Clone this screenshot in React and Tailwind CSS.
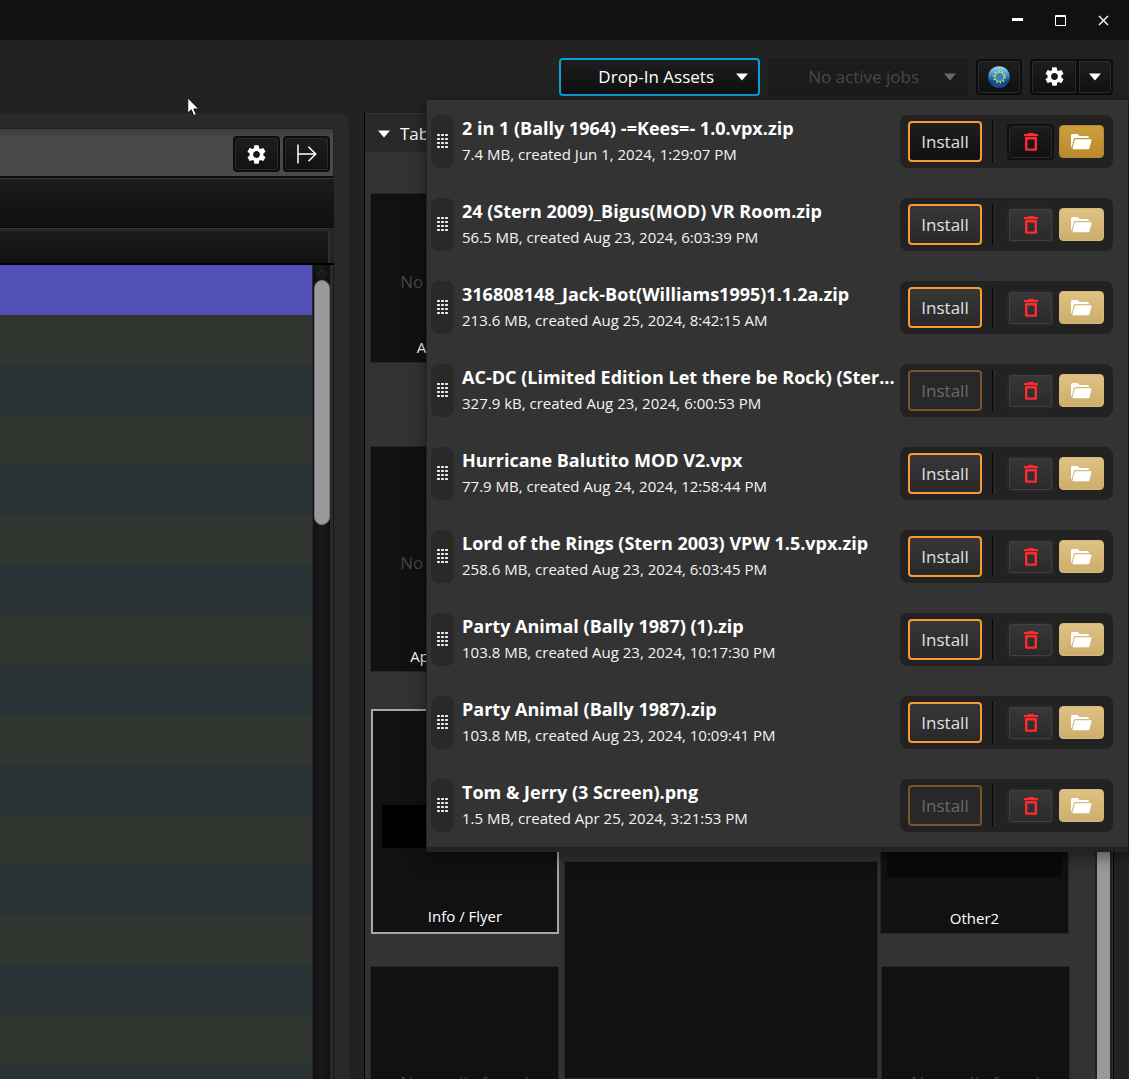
import React from "react";
import { MdSettings } from "react-icons/md";

const assets = [
  { name: "2 in 1 (Bally 1964) -=Kees=- 1.0.vpx.zip", info: "7.4 MB, created Jun 1, 2024, 1:29:07 PM", active: true },
  { name: "24 (Stern 2009)_Bigus(MOD) VR Room.zip", info: "56.5 MB, created Aug 23, 2024, 6:03:39 PM" },
  { name: "316808148_Jack-Bot(Williams1995)1.1.2a.zip", info: "213.6 MB, created Aug 25, 2024, 8:42:15 AM" },
  { name: "AC-DC (Limited Edition Let there be Rock) (Ster...", info: "327.9 kB, created Aug 23, 2024, 6:00:53 PM", disabled: true },
  { name: "Hurricane Balutito MOD V2.vpx", info: "77.9 MB, created Aug 24, 2024, 12:58:44 PM" },
  { name: "Lord of the Rings (Stern 2003) VPW 1.5.vpx.zip", info: "258.6 MB, created Aug 23, 2024, 6:03:45 PM" },
  { name: "Party Animal (Bally 1987) (1).zip", info: "103.8 MB, created Aug 23, 2024, 10:17:30 PM" },
  { name: "Party Animal (Bally 1987).zip", info: "103.8 MB, created Aug 23, 2024, 10:09:41 PM" },
  { name: "Tom & Jerry (3 Screen).png", info: "1.5 MB, created Apr 25, 2024, 3:21:53 PM", disabled: true },
];

const darkButton =
  "flex items-center justify-center rounded border-2 border-[#0c0c0c] bg-linear-to-b from-[#1e1e1e] to-[#111] text-white shadow-[inset_0_0_0_1px_#2b2b2b]";

function Triangle({ className }) {
  return (
    <svg viewBox="0 0 12 8" className={className} aria-hidden="true">
      <path d="M0 .5h12L6 7.5z" fill="currentColor" />
    </svg>
  );
}

function Grip() {
  return (
    <svg width="11" height="15" viewBox="0 0 11 15" fill="#f4f4f4" aria-hidden="true">
      {[0, 4, 8, 12].map((y) => [0, 4, 8].map((x) => <rect key={x + "-" + y} x={x} y={y} width="3" height="2" rx=".8" />))}
    </svg>
  );
}

function Trash() {
  return (
    <svg width="14" height="18" viewBox="0 0 14 18" aria-hidden="true">
      <path d="M4.500 0h5l1 1H14v2.200H0V1h3.500z" fill="#ff2b2f" />
      <path d="M2.200 5.300h9.600v11.300H2.200z" fill="none" stroke="#ff2b2f" strokeWidth="2.400" strokeLinejoin="round" />
    </svg>
  );
}

function OpenFolder() {
  return (
    <svg width="21" height="16" viewBox="0 0 21 16" fill="#fff" aria-hidden="true">
      <path d="M1.500 0H6.500L8.500 2H16.500Q18 2 18 3.500V4H4.200Q3 4 2.700 5.200L.700 13.500Q0 13 0 12V1.500Q0 0 1.500 0z" />
      <path d="M5 5.200H19.800Q20.800 5.200 20.500 6.300L18.500 14Q18.200 15.200 17 15.200H1.800Q1.300 15.200 1.500 14.500L3.500 6.400Q3.900 5.200 5 5.200z" />
    </svg>
  );
}

function Globe() {
  return (
    <svg width="22" height="22" viewBox="0 0 22 22" aria-hidden="true">
      <defs>
        <linearGradient id="globe" x1="0" y1="0" x2="0" y2="1">
          <stop offset="0" stopColor="#a9dcf2" />
          <stop offset=".35" stopColor="#4a9ad2" />
          <stop offset=".7" stopColor="#0b4f92" />
          <stop offset="1" stopColor="#1f4a94" />
        </linearGradient>
      </defs>
      <circle cx="11" cy="11" r="10.800" fill="url(#globe)" />
      <circle cx="11.500" cy="11" r="5.700" fill="none" stroke="#cfe05a" strokeWidth="1.700" strokeDasharray="1.400 2.180" />
      <circle cx="11.500" cy="11" r="4.500" fill="#3585c4" stroke="#c6da5a" strokeWidth="1.100" />
    </svg>
  );
}

function AssetRow({ asset }) {
  return (
    <li className="flex h-[83px] items-start gap-2 last:h-[68px]">
      <div className="flex h-[53px] w-[23px] shrink-0 items-center justify-center rounded-lg bg-[#292929]">
        <Grip />
      </div>
      <div className="min-w-0 flex-1 whitespace-nowrap text-white">
        <div className="text-[18px] leading-[26px] font-bold">{asset.name}</div>
        <div className="text-[15px] leading-[26px] text-[#f4f4f4]">{asset.info}</div>
      </div>
      <div className="flex h-[53px] w-[213px] shrink-0 items-center rounded-lg bg-[#222] pl-2">
        <button
          disabled={asset.disabled}
          className={
            "h-[41px] w-[74px] rounded border-2 text-[17px] " +
            (asset.disabled
              ? "border-[#7c5226] bg-[#282828] text-[#6a6a6a]"
              : asset.active
                ? "border-[#fa9a32] bg-linear-to-b from-[#1e1e1e] to-[#101010] text-[#e0e0e0]"
                : "border-[#fa9a32] bg-linear-to-b from-[#373737] to-[#292929] text-[#e0e0e0]")
          }
        >
          Install
        </button>
        <div className="mr-3 ml-[10px] h-[41px] w-[3px] border-x border-l-[#0a0a0a] border-r-[#303030] bg-[#181818]" />
        <button
          aria-label="Delete"
          className={
            "flex h-9 w-[47px] items-center justify-center rounded border-2 " +
            (asset.active
              ? "border-[#0f0f0f] bg-linear-to-b from-[#1d1d1d] to-[#111] shadow-[inset_0_0_0_1px_#2a2a2a]"
              : "border-[#272727] bg-linear-to-b from-[#383838] to-[#2a2a2a] shadow-[inset_0_0_0_1px_#404040]")
          }
        >
          <Trash />
        </button>
        <button
          aria-label="Open folder"
          className={
            "ml-[5px] flex h-[33px] w-[45px] items-center justify-center rounded border " +
            (asset.active
              ? "border-[#b08a35] bg-linear-to-b from-[#cd9f3d] to-[#b88a2b]"
              : "border-[#d6b87d] bg-linear-to-b from-[#dfc184] to-[#ceae6c]")
          }
        >
          <OpenFolder />
        </button>
      </div>
    </li>
  );
}

function MediaCell({ label, className }) {
  return (
    <div className={"relative flex shrink-0 flex-col items-center justify-center border border-[#262626] bg-[#111] " + className}>
      <span className="pt-2 text-[17px] leading-6 whitespace-nowrap text-[#444]">No media found</span>
      {label && <span className="absolute inset-x-0 bottom-[5px] text-center text-[15px] leading-5 text-white">{label}</span>}
    </div>
  );
}

function TablePanel() {
  const rows = Array.from({ length: 16 }, (_, i) => i);
  return (
    <section className="flex w-[349px] shrink-0 flex-col rounded-tr-xl bg-[#292929] pt-[15px] pr-[15px]">
      <div className="flex h-[50px] shrink-0 items-center justify-end gap-[3px] border-t border-r border-b-2 border-t-[#222] border-r-[#222] border-b-[#0c0c0c] bg-linear-to-b from-[#3a3a3a] to-[#4a4a4a] to-20% pt-[3px] pr-[3px]">
        <button aria-label="Settings" className={darkButton + " h-9 w-[47px]"}>
          <MdSettings size={23} />
        </button>
        <button aria-label="Expand" className={darkButton + " h-9 w-[47px]"}>
          <svg width="20" height="20" viewBox="0 0 20 20" fill="none" stroke="#fff" strokeWidth="1.500" aria-hidden="true">
            <path d="M1 .5v19M1 10h17.500M11.500 2.800L18.700 10l-7.200 7.200" />
          </svg>
        </button>
      </div>
      <div className="h-[50px] shrink-0 border-t border-t-[#3a3a3a] bg-linear-to-b from-[#1c1c1c] to-[#0f0f0f]" />
      <div className="flex h-[37px] shrink-0 border-t border-b-2 border-[#000] border-t-[#333] bg-[#242424] pr-[3px]">
        <div className="mt-px mr-px flex-1 border-t border-r-2 border-t-[#2e2e2e] border-r-[#303030] bg-linear-to-b from-[#1c1c1c] to-[#101010]" />
      </div>
      <div className="flex min-h-0 flex-1">
        <div className="min-w-0 flex-1 overflow-hidden">
          <div className="h-[50px] bg-[#5351b7]" />
          {rows.map((i) => (
            <div key={i} className={"h-[50px] " + (i % 2 ? "bg-[#293336]" : "bg-[#303530]")} />
          ))}
        </div>
        <div className="flex w-[19px] flex-col items-center border-x border-[#282828] bg-linear-to-r from-[#101010] via-[#1a1a1a] to-[#101010] pl-px">
          <svg width="12" height="6" viewBox="0 0 12 6" className="mt-1 mb-[5px] shrink-0" fill="none" stroke="#333" aria-hidden="true">
            <path d="M1 5.500L6 1l5 4.500" />
          </svg>
          <div className="h-[245px] w-4 shrink-0 rounded-full border border-[#777] bg-[#9a9a9a]" />
        </div>
        <div className="w-[3px] border-r border-[#151515] bg-[#2c2c2c]" />
      </div>
    </section>
  );
}

function MediaPanel() {
  return (
    <section className="flex min-w-0 flex-1 flex-col border-x border-[#000] bg-[#333]">
      <h2 className="flex h-[39px] shrink-0 items-center gap-[10px] border-t border-[#333] bg-[#292929] pt-px pl-[13px] text-[17px] text-white">
        <Triangle className="h-[10px] w-[12px]" />
        Table Assets
      </h2>
      <div className="flex min-h-0 flex-1">
        <div className="flex min-w-0 flex-1 gap-[5px] overflow-hidden pl-[5px]">
          <div className="flex w-[189px] shrink-0 flex-col">
            <MediaCell label="Audio Launch" className="mt-[41px] h-[170px]" />
            <MediaCell label="Apron/FullDMD" className="mt-[83px] h-[226px]" />
            <div className="mt-[37px] ml-px flex h-[225px] shrink-0 flex-col items-center border-2 border-[#aaa6a6] bg-[#111] px-[9px] pt-[94px]">
              <div className="h-[43px] w-full shrink-0 bg-[#000]" />
              <span className="mt-[58px] text-[15px] leading-5 text-white">Info / Flyer</span>
            </div>
            <MediaCell className="mt-8 h-[225px]" />
          </div>
          <div className="mt-[709px] w-[314px] shrink-0 border border-[#262626] bg-[#111]" />
          <div className="flex w-[190px] shrink-0 flex-col">
            <div className="mt-[557px] mr-1 -ml-[3px] flex h-[225px] shrink-0 flex-col items-center border border-[#262626] bg-[#111] px-[6px]">
              <div className="h-[167px] w-full shrink-0 bg-[#0a0a0a]" />
              <span className="mt-[31px] text-[15px] leading-5 text-white">Other2</span>
            </div>
            <MediaCell className="mt-8 mr-[3px] -ml-[2px] h-[225px]" />
          </div>
        </div>
        <div className="mr-px w-[17px] shrink-0 border-x-2 border-[#222] bg-[#9a9a9a]" />
      </div>
    </section>
  );
}

export default function App() {
  return (
    <main className="relative flex h-screen flex-col overflow-hidden bg-[#222] font-['Open_Sans','Noto_Sans',sans-serif]">
      <header className="flex h-10 shrink-0 items-center justify-end gap-8 bg-[#111] pr-5 text-white">
        <button aria-label="Minimize">
          <svg width="11" height="11" viewBox="0 0 11 11" aria-hidden="true">
            <path d="M0 3h11v3H0z" fill="#fff" />
          </svg>
        </button>
        <button aria-label="Maximize">
          <svg width="11" height="11" viewBox="0 0 11 11" fill="none" stroke="#fff" aria-hidden="true">
            <path d="M.5.5h10v10H.5zM0 1.500h11" />
          </svg>
        </button>
        <button aria-label="Close">
          <svg width="11" height="11" viewBox="0 0 11 11" stroke="#fff" strokeWidth="1.400" aria-hidden="true">
            <path d="M1 1l9 9M10 1l-9 9" />
          </svg>
        </button>
      </header>

      <div className="flex h-[73px] shrink-0 items-center justify-end gap-2 pr-4">
        <button className="flex h-[38px] w-[201px] items-center justify-end gap-[22px] rounded border-2 border-[#0a9fdb] bg-linear-to-b from-[#1e1e1e] to-[#101010] pr-[10px] text-[17px] text-white">
          Drop-In Assets
          <Triangle className="h-2 w-[12px]" />
        </button>
        <button disabled className="flex h-[38px] w-[200px] items-center justify-end gap-[25px] rounded bg-[#1c1c1c] pr-3 text-[17px] text-[#484848]">
          No active jobs
          <Triangle className="h-2 w-[12px] text-[#6a6a6a]" />
        </button>
        <button aria-label="Online" className={darkButton + " h-9 w-[46px]"}>
          <Globe />
        </button>
        <div className="flex">
          <button aria-label="Preferences" className={darkButton + " h-9 w-12 rounded-r-none"}>
            <MdSettings size={23} />
          </button>
          <button aria-label="More preferences" className={darkButton + " h-9 w-[35px] rounded-l-none border-l"}>
            <Triangle className="h-2 w-[12px]" />
          </button>
        </div>
      </div>

      <div className="flex min-h-0 flex-1 gap-[15px] pr-[15px]">
        <TablePanel />
        <MediaPanel />
      </div>

      <ul className="absolute top-[100px] right-px w-[702px] border-b-[5px] border-l border-[#222] bg-[#333] pt-[15px] pr-[15px] pl-1 shadow-[0_4px_16px_rgba(0,0,0,0.5)]">
        {assets.map((asset) => (
          <AssetRow key={asset.name} asset={asset} />
        ))}
      </ul>

      <svg width="13" height="20" viewBox="0 0 13 20" className="absolute top-[97px] left-[187px]" aria-hidden="true">
        <path d="M.8 1v15l3.500-3.300 2.500 5.800 2.500-1-2.500-5.600h4.900z" fill="#fff" stroke="#000" strokeWidth=".8" />
      </svg>
    </main>
  );
}
